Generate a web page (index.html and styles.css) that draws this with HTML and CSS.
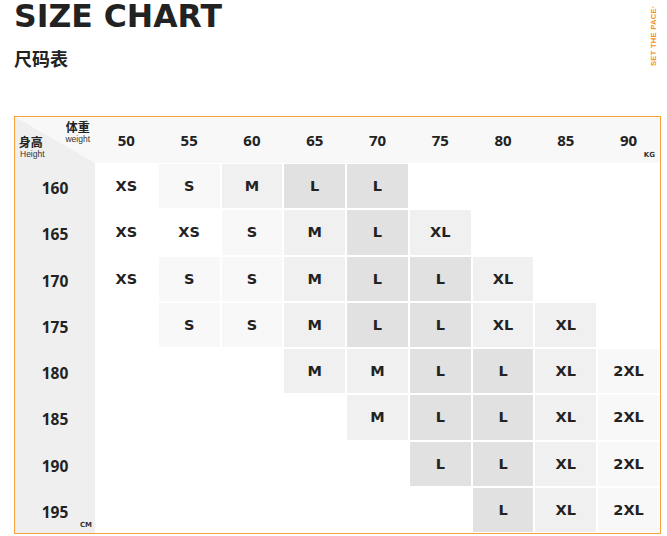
FILE: index.html
```html
<!DOCTYPE html>
<html lang="zh">
<head>
<meta charset="utf-8">
<title>Size Chart</title>
<link rel="stylesheet" href="styles.css">
</head>
<body>
<div class="page">
  <header class="top">
    <div class="titles">
      <h1 class="title">SIZE CHART</h1>
      <h2 class="subtitle">尺码表</h2>
    </div>
    <div class="brand">SET THE PACE<span class="deg">°</span></div>
  </header>

  <div class="chart">
    <div class="corner">
      <div class="corner-w"><span class="cn">体重</span><span class="en">weight</span></div>
      <div class="corner-h"><span class="cn">身高</span><span class="en">Height</span></div>
    </div>
    <div class="hd">50</div>
    <div class="hd">55</div>
    <div class="hd">60</div>
    <div class="hd">65</div>
    <div class="hd">70</div>
    <div class="hd">75</div>
    <div class="hd">80</div>
    <div class="hd">85</div>
    <div class="hd">90<span class="unit unit-kg">KG</span></div>

    <div class="rl">160</div>
    <div class="c xs">XS</div><div class="c s">S</div><div class="c m">M</div><div class="c l">L</div><div class="c l">L</div><div class="c e"></div><div class="c e"></div><div class="c e"></div><div class="c e"></div>

    <div class="rl">165</div>
    <div class="c xs">XS</div><div class="c xs">XS</div><div class="c s">S</div><div class="c m">M</div><div class="c l">L</div><div class="c xl">XL</div><div class="c e"></div><div class="c e"></div><div class="c e"></div>

    <div class="rl">170</div>
    <div class="c xs">XS</div><div class="c s">S</div><div class="c s">S</div><div class="c m">M</div><div class="c l">L</div><div class="c l">L</div><div class="c xl">XL</div><div class="c e"></div><div class="c e"></div>

    <div class="rl">175</div>
    <div class="c e"></div><div class="c s">S</div><div class="c s">S</div><div class="c m">M</div><div class="c l">L</div><div class="c l">L</div><div class="c xl">XL</div><div class="c xl">XL</div><div class="c e"></div>

    <div class="rl">180</div>
    <div class="c e"></div><div class="c e"></div><div class="c e"></div><div class="c m">M</div><div class="c m">M</div><div class="c l">L</div><div class="c l">L</div><div class="c xl">XL</div><div class="c xxl">2XL</div>

    <div class="rl">185</div>
    <div class="c e"></div><div class="c e"></div><div class="c e"></div><div class="c e"></div><div class="c m">M</div><div class="c l">L</div><div class="c l">L</div><div class="c xl">XL</div><div class="c xxl">2XL</div>

    <div class="rl">190</div>
    <div class="c e"></div><div class="c e"></div><div class="c e"></div><div class="c e"></div><div class="c e"></div><div class="c l">L</div><div class="c l">L</div><div class="c xl">XL</div><div class="c xxl">2XL</div>

    <div class="rl">195<span class="unit unit-cm">CM</span></div>
    <div class="c e"></div><div class="c e"></div><div class="c e"></div><div class="c e"></div><div class="c e"></div><div class="c e"></div><div class="c l">L</div><div class="c xl">XL</div><div class="c xxl">2XL</div>
  </div>
</div>
</body>
</html>
```

FILE: styles.css
```css
* { box-sizing: border-box; }

html, body {
  margin: 0;
  padding: 0;
  background: #ffffff;
}

.page {
  width: 667px;
  padding: 2px 6px 0 14px;
  color: #222222;
}

.top {
  display: flex;
  justify-content: space-between;
  align-items: flex-start;
}

.title {
  margin: 0;
  font-family: "DejaVu Sans", sans-serif;
  font-weight: 700;
  font-size: 31.5px;
  line-height: 28px;
  color: #222222;
}

.subtitle {
  margin: 16px 0 0 0;
  font-family: "Noto Sans CJK SC", sans-serif;
  font-weight: 700;
  font-size: 18px;
  line-height: 24px;
  color: #222222;
}

.brand {
  margin: 4px 3px 0 0;
  writing-mode: vertical-rl;
  transform: rotate(180deg);
  font-family: "Liberation Sans", sans-serif;
  font-weight: 700;
  font-size: 7.5px;
  letter-spacing: 0.3px;
  line-height: 8px;
  color: #f39020;
}

.brand .deg {
  font-size: 5px;
}

.chart {
  margin-top: 46px;
  width: 647px;
  height: 418px;
  border: 1px solid #f7a03c;
  display: grid;
  grid-template-columns: 80px repeat(9, 1fr);
  grid-template-rows: 46px repeat(8, 1fr);
}

.corner {
  background: linear-gradient(to top right, #efefef 50%, #f8f8f8 50%);
  display: grid;
  grid-template-areas: "stack";
  padding: 2px 5px 4px 2px;
}

.corner-w, .corner-h {
  grid-area: stack;
  display: flex;
  flex-direction: column;
  align-items: center;
}

.corner-w { align-self: start; justify-self: end; }
.corner-h { align-self: end; justify-self: start; }

.cn {
  font-family: "Noto Sans CJK SC", sans-serif;
  font-weight: 700;
  font-size: 12px;
  line-height: 16px;
}

.en {
  font-family: "Liberation Sans", sans-serif;
  font-size: 8.5px;
  line-height: 9px;
  color: #333333;
}

.corner-h .en { margin-left: 3px; }

.hd {
  background: #f8f8f8;
  display: flex;
  align-items: center;
  justify-content: center;
  font-family: "Open Sans", sans-serif;
  font-weight: 700;
  font-size: 15px;
  position: relative;
}

.rl {
  background: #efefef;
  display: flex;
  align-items: center;
  justify-content: center;
  padding-top: 4px;
  font-family: "Open Sans", sans-serif;
  font-weight: 700;
  font-size: 15.5px;
  position: relative;
}

.unit {
  position: absolute;
  font-family: "DejaVu Sans", sans-serif;
  font-weight: 700;
  font-size: 7px;
  line-height: 7px;
  color: #333333;
}

.unit-kg { right: 5px; bottom: 4px; }
.unit-cm { right: 3px; bottom: 4px; }

.c {
  border: 1px solid #ffffff;
  display: flex;
  align-items: center;
  justify-content: center;
  font-family: "DejaVu Sans", sans-serif;
  font-weight: 700;
  font-size: 14.5px;
  color: #222222;
}

.c.e, .c.xs { background: #ffffff; }
.c.s { background: #f8f8f8; }
.c.m { background: #f0f0f0; }
.c.l { background: #e1e1e1; }
.c.xl { background: #f0f0f0; }
.c.xxl { background: #f8f8f8; }
```
